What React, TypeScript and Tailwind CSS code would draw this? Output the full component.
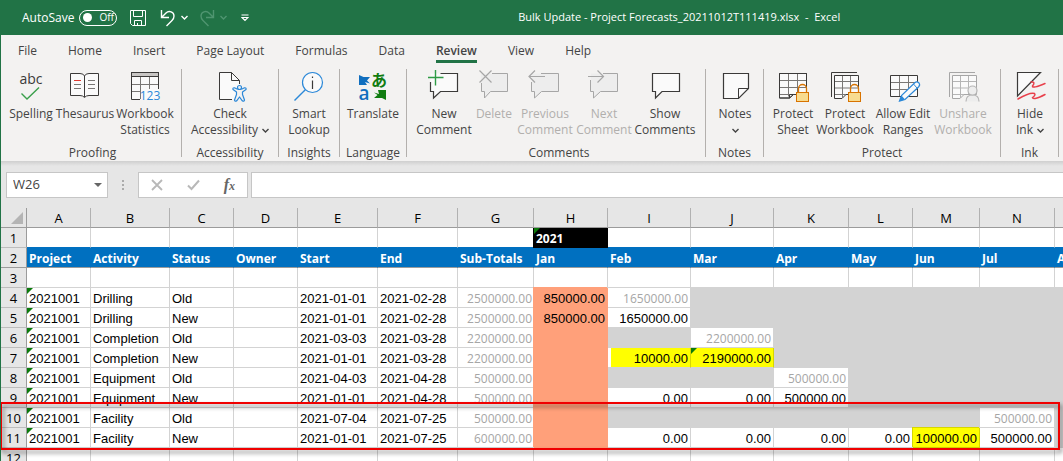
import type { ReactNode } from "react";
import clsx from "clsx";

/* ---------- icons ---------- */

const Svg = ({ children }: { children: ReactNode }) => (
  <svg
    viewBox="0 0 32 32"
    className="h-8 w-8 overflow-visible"
    fill="none"
    stroke="#3b3a39"
    aria-hidden="true"
  >
    {children}
  </svg>
);

const BUBBLE = "M12.5 4.5H29.5V22.5H12.5L5.5 29V22.5H2.5V13";

const Grid = ({ x, y, color }: { x: number; y: number; color: string }) => (
  <g transform={`translate(${x} ${y})`} stroke={color}>
    <path fill="#fafafa" d="M0 0H27V21H14L10 24.5H0Z" />
    <path stroke="#797775" d="M9 .5V23M18 .5V20.5M.5 7H26.5M.5 14H26.5M.5 21H10" />
    <path d="M10 24.5V21H14M0 0H27V21H14L10 24.5H0Z" />
  </g>
);

const SmallGrid = ({ color, inner }: { color: string; inner: string }) => (
  <g stroke={color}>
    <path d="M2.5 28V3.5H28" />
    <path fill="#fafafa" d="M5.5 6.5H29.5V25.5H17L13 29.5H5.5Z" />
    <path stroke={inner} d="M13.5 7V29M21.5 7V25M6 12.5H29M6 19H29M6 25.5H17" />
  </g>
);

const Lock = () => (
  <g stroke="#d87300">
    <path d="M21.5 23V19.5a4 4 0 0 1 8 0V23" strokeWidth="1.3" />
    <rect x="19.5" y="23.5" width="12" height="9" fill="#f8db8f" />
  </g>
);

const icons = {
  spelling: (
    <Svg>
      <text
        x="16"
        y="15"
        textAnchor="middle"
        stroke="none"
        fill="#3b3a39"
        fontSize="14"
        fontFamily="Open Sans, sans-serif"
      >
        abc
      </text>
      <path stroke="#3a9f4b" strokeWidth="1.4" d="M6.5 24.5L12 30L24 18.5" />
    </Svg>
  ),
  thesaurus: (
    <Svg>
      <path
        fill="#fafafa"
        d="M1.5 4.5H11Q14.5 4.5 15.5 7Q16.5 4.5 20 4.5H29.5V26.5H20Q17 26.5 15.5 28.5Q14 26.5 11 26.5H1.5Z"
      />
      <path d="M15.5 7V28" />
      <path stroke="#797775" d="M5 15.5H12M5 19.5H12M19 11.5H26M19 15.5H26M19 19.5H26" />
      <path stroke="#e03c32" d="M5 11.5H12" />
    </Svg>
  ),
  statistics: (
    <Svg>
      <rect x="2.5" y="3.5" width="27" height="27" fill="#fafafa" stroke="none" />
      <rect x="2.5" y="3.5" width="27" height="4" fill="#c8c6c4" />
      <path stroke="#797775" d="M11.5 8V30M20.5 8V20M3 15.5H29M3 22.5H12" />
      <path d="M11 30.5H2.5V3.5H29.5V20" />
      <text
        x="21"
        y="31"
        textAnchor="middle"
        fontSize="12"
        fill="#2b88d8"
        stroke="none"
        fontFamily="Open Sans, sans-serif"
      >
        123
      </text>
    </Svg>
  ),
  accessibility: (
    <Svg>
      <path fill="#fafafa" stroke="none" d="M5.5 3.5H17.5L25.5 11.5V30.5H5.5Z" />
      <path d="M18 30.5H5.5V3.5H17.5L25.5 11.5V15M17.5 3.5V11.5H25.5" />
      <g stroke="#2b88d8" fill="#f3f2f1" strokeWidth="1.2" strokeLinejoin="round">
        <path d="M19 20.5Q18.5 18.5 20.5 18.8L23 20H28L30.5 18.8Q32.5 18.5 32 20.5L28.5 23V25.5L30.5 31Q30 33 28.3 31.8L25.5 28L22.7 31.8Q21 33 20.5 31L22.5 25.5V23Z" />
        <circle cx="25.5" cy="18.5" r="2" />
      </g>
    </Svg>
  ),
  lookup: (
    <Svg>
      <circle cx="19.5" cy="13.5" r="10" fill="#fafafa" stroke="#2b88d8" strokeWidth="1.2" />
      <path stroke="#2b88d8" strokeWidth="1.4" d="M12.3 20.8L1.5 31.5" />
      <path d="M19.5 11.5V20M19.5 7.5V9" strokeWidth="1.2" />
    </Svg>
  ),
  translate: (
    <Svg>
      <path fill="#106ebe" stroke="none" d="M2 6L6.5 8H13L10 11.5L13 14.5L8 13L10 16H2Z" />
      <path fill="#107c10" stroke="none" d="M29 31L25 29H17L20.5 26L17 23.5L22 25L21 21H29Z" />
      <text
        x="22"
        y="17"
        textAnchor="middle"
        fontSize="16"
        fontWeight="700"
        fill="#107c10"
        stroke="none"
        fontFamily="Noto Sans CJK JP, sans-serif"
      >
        あ
      </text>
      <text
        x="7"
        y="31"
        textAnchor="middle"
        fontSize="19"
        fontWeight="600"
        fill="#106ebe"
        stroke="none"
        fontFamily="Open Sans, sans-serif"
      >
        a
      </text>
    </Svg>
  ),
  newComment: (
    <Svg>
      <path fill="#fafafa" stroke="none" d="M2.5 4.5H29.5V22.5H12.5L5.5 29V22.5H2.5Z" />
      <path d={BUBBLE} strokeWidth="1.2" />
      <path stroke="#2f9b45" strokeWidth="1.4" d="M0 8.5H15.5M7.5 1V16.5" />
    </Svg>
  ),
  deleteComment: (
    <Svg>
      <g stroke="#a6a6a6">
        <path fill="#ededed" stroke="none" d="M3 4.5H30V22.5H12L6 29V22.5H3Z" />
        <path d="M14 4.5H29.5V22.5H12.5L6.5 29V22.5H3.5V14" />
        <path strokeWidth="1.2" d="M1.5 1.5L13.5 13.5M13.5 1.5L1.5 13.5" />
      </g>
    </Svg>
  ),
  previousComment: (
    <Svg>
      <g stroke="#a6a6a6">
        <path fill="#ededed" stroke="none" d="M3 4.5H30V22.5H12L6 29V22.5H3Z" />
        <path d="M12 4.5H29.5V22.5H12.5L5.5 29V22.5H2.5V13" />
        <path strokeWidth="1.2" d="M16 7.5H0M6 1.5L0 7.5L6 13.5" />
      </g>
    </Svg>
  ),
  nextComment: (
    <Svg>
      <g stroke="#a6a6a6">
        <path fill="#ededed" stroke="none" d="M3 4.5H30V22.5H12L6 29V22.5H3Z" />
        <path d="M15 4.5H29.5V22.5H12.5L5.5 29V22.5H2.5V11" />
        <path strokeWidth="1.2" d="M0 7.5H15.5M9.5 1.5L15.5 7.5L9.5 13.5" />
      </g>
    </Svg>
  ),
  showComments: (
    <Svg>
      <path fill="#fafafa" strokeWidth="1.2" d="M3.5 4.5H30.5V22.5H13L6.5 29V22.5H3.5Z" />
    </Svg>
  ),
  notes: (
    <Svg>
      <path fill="#fafafa" strokeWidth="1.2" d="M4.5 4.5H29.5V19.5L19.5 29.5H4.5Z" />
      <path d="M19.5 29.5V19.5H29.5" />
    </Svg>
  ),
  protectSheet: (
    <Svg>
      <Grid x={2.5} y={4.5} color="#3b3a39" />
      <Lock />
    </Svg>
  ),
  protectWorkbook: (
    <Svg>
      <SmallGrid color="#3b3a39" inner="#797775" />
      <Lock />
    </Svg>
  ),
  allowEdit: (
    <Svg>
      <path fill="#fafafa" d="M3.5 6.5H30.5V27.5H3.5Z" />
      <path stroke="#797775" d="M12.5 7V27M21.5 7V27M4 13.5H30M4 20.5H30" />
      <path
        fill="#fafafa"
        stroke="#2b88d8"
        strokeWidth="1.2"
        d="M12.5 32L14.5 26.5L28 13.5Q30 12 32 14Q33.5 16 31.5 18L18 30.5Z"
      />
      <path fill="#2b88d8" stroke="none" d="M12.5 32L14.5 26.5L18 30.5Z" />
      <path stroke="#2b88d8" d="M26.5 15L30 19" />
    </Svg>
  ),
  unshare: (
    <Svg>
      <SmallGrid color="#a6a6a6" inner="#b5b5b5" />
      <g fill="#ededed" stroke="#b5b5b5" strokeWidth="1.2">
        <path d="M19 32.5Q19 26 25.5 26Q32 26 32 32.5" />
        <circle cx="25.5" cy="21.5" r="4.5" />
      </g>
    </Svg>
  ),
  hideInk: (
    <Svg>
      <path fill="#fafafa" strokeWidth="1.2" d="M3.5 3.5H26.5L3.5 27Z" />
      <g stroke="#e8404b" strokeWidth="1.5" strokeLinecap="round">
        <path d="M17 13Q22 12.5 18.5 17Q18 20 31 14.5" />
        <path d="M4 30Q16 23 20.5 24.5Q22 26 18.5 28.5Q19.5 31.5 31 25.5" />
      </g>
    </Svg>
  ),
};

const Chevron = () => (
  <svg
    viewBox="0 0 7 5"
    className="h-[5px] w-[7px]"
    fill="none"
    stroke="currentColor"
    strokeWidth="1.4"
    aria-hidden="true"
  >
    <path d="M.5 1L3.5 4L6.5 1" />
  </svg>
);

/* ---------- ribbon ---------- */

type Tool = {
  lines: string[];
  icon: ReactNode;
  width: string;
  disabled?: boolean;
  menu?: boolean;
};

type Group = { label: string; className: string; tools: Tool[] };

const groups: Group[] = [
  {
    label: "Proofing",
    className: "w-[181px] pl-[3px]",
    tools: [
      { lines: ["Spelling"], icon: icons.spelling, width: "w-[54px]" },
      { lines: ["Thesaurus"], icon: icons.thesaurus, width: "w-[54px]" },
      { lines: ["Workbook", "Statistics"], icon: icons.statistics, width: "w-[66px]" },
    ],
  },
  {
    label: "Accessibility",
    className: "w-[97px] px-1",
    tools: [
      { lines: ["Check", "Accessibility"], icon: icons.accessibility, width: "w-[88px]", menu: true },
    ],
  },
  {
    label: "Insights",
    className: "w-[61px] px-1",
    tools: [{ lines: ["Smart", "Lookup"], icon: icons.lookup, width: "w-[52px]" }],
  },
  {
    label: "Language",
    className: "w-[67px] px-1",
    tools: [{ lines: ["Translate"], icon: icons.translate, width: "w-[58px]" }],
  },
  {
    label: "Comments",
    className: "w-[299px] pr-1 pl-[10px]",
    tools: [
      { lines: ["New", "Comment"], icon: icons.newComment, width: "w-[54px]" },
      { lines: ["Delete"], icon: icons.deleteComment, width: "w-[46px]", disabled: true },
      { lines: ["Previous", "Comment"], icon: icons.previousComment, width: "w-[56px]", disabled: true },
      { lines: ["Next", "Comment"], icon: icons.nextComment, width: "w-[62px]", disabled: true },
      { lines: ["Show", "Comments"], icon: icons.showComments, width: "w-[60px]" },
    ],
  },
  {
    label: "Notes",
    className: "w-[58px] px-1",
    tools: [{ lines: ["Notes", ""], icon: icons.notes, width: "w-[50px]", menu: true }],
  },
  {
    label: "Protect",
    className: "w-[237px] px-[5px]",
    tools: [
      { lines: ["Protect", "Sheet"], icon: icons.protectSheet, width: "w-[48px]" },
      { lines: ["Protect", "Workbook"], icon: icons.protectWorkbook, width: "w-[56px]" },
      { lines: ["Allow Edit", "Ranges"], icon: icons.allowEdit, width: "w-[60px]" },
      { lines: ["Unshare", "Workbook"], icon: icons.unshare, width: "w-[60px]", disabled: true },
    ],
  },
  {
    label: "Ink",
    className: "w-[58px] px-1",
    tools: [{ lines: ["Hide", "Ink"], icon: icons.hideInk, width: "w-[50px]", menu: true }],
  },
];

const ToolButton = ({ lines, icon, width, disabled, menu }: Tool) => (
  <button
    type="button"
    disabled={disabled}
    className={clsx(
      "flex shrink-0 flex-col items-center text-xs leading-4 text-[#444444] disabled:text-[#b1afad]",
      width,
    )}
  >
    {icon}
    <span className="flex flex-col items-center pt-[5px]">
      {lines.map((line, i) => (
        <span key={i} className="flex h-4 items-center gap-1 whitespace-nowrap">
          {line}
          {menu && i === lines.length - 1 && <Chevron />}
        </span>
      ))}
    </span>
  </button>
);

const RibbonGroup = ({ label, className, tools }: Group) => (
  <section
    aria-label={label}
    className={clsx("flex h-[88px] shrink-0 flex-col border-r border-[#b3b0ad]", className)}
  >
    <div className="flex h-[76px] shrink-0 items-start">
      {tools.map((tool, i) => (
        <ToolButton key={i} {...tool} />
      ))}
    </div>
    <div className="text-center text-xs leading-4 text-[#444444]">{label}</div>
  </section>
);

const tabs = ["File", "Home", "Insert", "Page Layout", "Formulas", "Data", "Review", "View", "Help"];

/* ---------- title bar ---------- */

const TitleBar = () => (
  <header className="flex h-[35px] items-center bg-[#217346] pl-[21px] text-xs text-white">
    <label htmlFor="autosave">AutoSave</label>
    <button
      id="autosave"
      type="button"
      role="switch"
      aria-checked="false"
      className="ml-[5px] flex h-4 w-[38px] items-center gap-[7px] rounded-full border border-white pl-[3px] text-[10px]"
    >
      <span className="size-[9px] rounded-full bg-white" />
      Off
    </button>
    <button type="button" aria-label="Save" className="ml-3">
      <svg viewBox="0 0 18 18" className="size-[18px]" fill="none" stroke="#fff">
        <path d="M1.5 1.5H16.5V16.5H3.5L1.5 14.5ZM4.5 1.5V7.5H13.5V1.5M5.5 16.5V11.5H12.5V16.5M8.5 14V16.5" />
      </svg>
    </button>
    <button type="button" aria-label="Undo" className="ml-3 flex items-center gap-1">
      <svg viewBox="0 0 18 18" className="size-[18px]" fill="none" stroke="#fff" strokeWidth="1.4">
        <path d="M2.5 1V8.500H10M2.500 8.500L7 4C10 1 15 3 15 7C15 9 14 10.500 13 11.500L7.500 17" />
      </svg>
      <Chevron />
    </button>
    <button
      type="button"
      aria-label="Redo"
      disabled
      className="ml-[10px] flex items-center gap-1 text-[#4f9570]"
    >
      <svg viewBox="0 0 18 18" className="size-[18px]" fill="none" stroke="currentColor" strokeWidth="1.4">
        <path d="M15.5 1V8.5H8M15.5 8.5L11 4C8 1 3 3 3 7C3 9 4 10.5 5 11.5L10.5 17" />
      </svg>
      <Chevron />
    </button>
    <button type="button" aria-label="Customize Quick Access Toolbar" className="ml-[14px]">
      <svg viewBox="0 0 8 8" className="size-2" fill="none" stroke="#fff" strokeWidth="1.2">
        <path d="M.5 1H7.5M1 3.5L4 6.5L7 3.5Z" />
      </svg>
    </button>
    <h1 className="flex-1 pl-[46px] text-center text-[11px] whitespace-pre">
      Bulk Update - Project Forecasts_20211012T111419.xlsx  -  Excel
    </h1>
  </header>
);

/* ---------- formula bar ---------- */

const FormulaBar = () => (
  <div className="bg-[#e6e6e6]">
    <div className="h-[5px] bg-linear-to-b from-[#cfcfcf] to-[#e6e6e6]" />
    <div className="flex h-[42px] items-start pt-[6px] pl-[5px]">
      <div className="flex h-[26px] w-[102px] items-center border border-[#c6c6c6] bg-white pr-[5px] pl-[6px]">
        <input
          aria-label="Name Box"
          defaultValue="W26"
          className="w-0 flex-1 bg-transparent text-[13px] text-[#444444] outline-none"
        />
        <button type="button" aria-label="Open Name Box">
          <svg viewBox="0 0 8 4" className="h-1 w-2" fill="#666">
            <path d="M0 0H8L4 4Z" />
          </svg>
        </button>
      </div>
      <div className="flex h-[26px] w-[30px] flex-col items-center justify-center gap-[2px]">
        <span className="size-[2px] bg-[#ababab]" />
        <span className="size-[2px] bg-[#ababab]" />
        <span className="size-[2px] bg-[#ababab]" />
      </div>
      <div className="flex h-[26px] w-[110px] items-center justify-between border border-[#c6c6c6] bg-white px-[12px]">
        <button type="button" aria-label="Cancel" disabled>
          <svg viewBox="0 0 12 12" className="size-3" stroke="#b8b8b8" strokeWidth="1.8">
            <path d="M1 1L11 11M11 1L1 11" />
          </svg>
        </button>
        <button type="button" aria-label="Enter" disabled>
          <svg viewBox="0 0 13 12" className="h-3 w-[13px]" fill="none" stroke="#b8b8b8" strokeWidth="2">
            <path d="M1 6.5L4.5 10L12 1.5" />
          </svg>
        </button>
        <button
          type="button"
          aria-label="Insert Function"
          className="font-['Liberation_Serif',serif] text-base leading-4 font-bold text-[#666666] italic"
        >
          f<span className="text-xs">x</span>
        </button>
      </div>
      <input
        aria-label="Formula Bar"
        className="ml-[3px] h-[26px] min-w-0 flex-1 border border-r-0 border-[#c6c6c6] bg-white outline-none"
      />
    </div>
  </div>
);

/* ---------- sheet ---------- */

const columns = [
  { name: "A", width: 64, title: "Project" },
  { name: "B", width: 79, title: "Activity" },
  { name: "C", width: 64, title: "Status" },
  { name: "D", width: 64, title: "Owner" },
  { name: "E", width: 80, title: "Start" },
  { name: "F", width: 80, title: "End" },
  { name: "G", width: 76, title: "Sub-Totals" },
  { name: "H", width: 74, title: "Jan" },
  { name: "I", width: 83, title: "Feb" },
  { name: "J", width: 83, title: "Mar" },
  { name: "K", width: 75, title: "Apr" },
  { name: "L", width: 64, title: "May" },
  { name: "M", width: 67, title: "Jun" },
  { name: "N", width: 75, title: "Jul" },
  { name: "", width: 64, title: "Aug" },
];

// One entry per month column, Jan to Aug. "#" is a blocked month.
const rows = [
  ["Drilling", "Old", "2021-01-01", "2021-02-28", "2500000.00", "850000.00", "1650000.00", "#", "#", "#", "#", "#", "#"],
  ["Drilling", "New", "2021-01-01", "2021-02-28", "2500000.00", "850000.00", "1650000.00", "#", "#", "#", "#", "#", "#"],
  ["Completion", "Old", "2021-03-03", "2021-03-28", "2200000.00", "", "#", "2200000.00", "#", "#", "#", "#", "#"],
  ["Completion", "New", "2021-01-01", "2021-03-28", "2200000.00", "", "10000.00", "2190000.00", "#", "#", "#", "#", "#"],
  ["Equipment", "Old", "2021-04-03", "2021-04-28", "500000.00", "", "#", "#", "500000.00", "#", "#", "#", "#"],
  ["Equipment", "New", "2021-01-01", "2021-04-28", "500000.00", "", "0.00", "0.00", "500000.00", "#", "#", "#", "#"],
  ["Facility", "Old", "2021-07-04", "2021-07-25", "500000.00", "", "#", "#", "#", "#", "#", "500000.00", "#"],
  ["Facility", "New", "2021-01-01", "2021-07-25", "600000.00", "", "0.00", "0.00", "0.00", "0.00", "100000.00", "500000.00", "#"],
];

const Flag = () => (
  <span className="absolute top-0 left-0 size-[6px] bg-[#0b7a0b] [clip-path:polygon(0_0,100%_0,0_100%)]" />
);

const cellBase = "relative h-5 border-r border-b p-0 pt-[2px] whitespace-nowrap leading-[17px]";

const RowHeader = ({ n, strong }: { n: number; strong?: boolean }) => (
  <th
    scope="row"
    className={clsx(
      cellBase,
      "border-r-[#9b9b9b] bg-[#e6e6e6] text-center text-[13px] font-normal",
      strong ? "border-b-[#9b9b9b]" : "border-b-[#bdbdbd]",
    )}
  >
    {n}
  </th>
);

const EmptyRow = ({ n }: { n: number }) => (
  <tr>
    <RowHeader n={n} />
    {columns.map((c, i) => (
      <td key={i} className={clsx(cellBase, "border-[#d3d3d3]")} />
    ))}
  </tr>
);

const MonthCell = ({ value, row, month }: { value: string; row: number; month: number }) => {
  const blocked = value === "#";
  const faded = row % 2 === 0 && month > 0;
  const changed = row === 3 && (month === 1 || month === 2);
  const selected = row === 7 && month === 5;

  return (
    <td
      className={clsx(
        cellBase,
        "pr-[2px] text-right",
        month === 0 && "border-[#ffa07a] bg-[#ffa07a] shadow-[-1px_-1px_0_#ffa07a]",
        blocked && "border-[#d3d3d3] bg-[#d3d3d3]",
        changed && "border-[#d3d3d3] border-r-[#d6d600] bg-[#ffff00]",
        changed && month === 1 && "shadow-[inset_3px_0_0_#ffffff]",
        selected && "border-[#d6d600] bg-[#ffff00] shadow-[-1px_-1px_0_#d6d600]",
        month > 0 && !blocked && !changed && !selected && "border-[#d3d3d3]",
        faded ? "font-['Open_Sans',sans-serif] text-xs leading-[17px] text-[#a6a6a6]" : "text-[13px]",
      )}
    >
      {row === 3 && month === 2 && <Flag />}
      {!blocked && value}
    </td>
  );
};

const Sheet = () => (
  <main className="relative overflow-hidden">
    <table className="w-full min-w-[1118px] table-fixed border-separate border-spacing-0 bg-white text-black">
      <colgroup>
        <col style={{ width: 26 }} />
        {columns.map((c, i) => (
          <col key={i} style={i < columns.length - 1 ? { width: c.width } : undefined} />
        ))}
      </colgroup>
      <thead>
        <tr className="bg-[#e6e6e6] text-[13px]">
          <th aria-label="Select all" className={clsx(cellBase, "border-[#9b9b9b]")}>
            <span className="absolute right-[3px] bottom-[3px] size-3 bg-[#b4b4b4] [clip-path:polygon(100%_0,100%_100%,0_100%)]" />
          </th>
          {columns.map((c, i) => (
            <th
              key={i}
              scope="col"
              className={clsx(cellBase, "border-r-[#b1b1b1] border-b-[#9b9b9b] text-center font-normal")}
            >
              {c.name}
            </th>
          ))}
        </tr>
      </thead>
      <tbody className="font-['Liberation_Sans',Arial,sans-serif] text-[13px] [&_th]:font-['Open_Sans',sans-serif]">
        <tr>
          <RowHeader n={1} />
          {columns.map((c, i) => (
            <td
              key={i}
              className={clsx(
                cellBase,
                c.name === "H"
                  ? "border-black bg-black pl-[2px] font-['Open_Sans',sans-serif] text-xs leading-[17px] font-bold text-white shadow-[-1px_0_0_#000000]"
                  : "border-r-[#d3d3d3] border-b-[#0070c0]",
              )}
            >
              {c.name === "H" && (
                <>
                  <Flag />
                  2021
                </>
              )}
            </td>
          ))}
        </tr>
        <tr>
          <RowHeader n={2} strong />
          {columns.map((c) => (
            <td
              key={c.title}
              className={clsx(
                cellBase,
                "border-r-[#0070c0] border-b-[#9b9b9b] bg-[#0070c0] pl-[2px] font-['Open_Sans',sans-serif] text-xs leading-[17px] font-bold text-white",
              )}
            >
              {c.title}
            </td>
          ))}
        </tr>
        <EmptyRow n={3} />
        {rows.map(([activity, status, start, end, total, ...months], r) => (
          <tr key={r}>
            <RowHeader n={r + 4} />
            {["2021001", activity, status, "", start, end].map((value, i) => (
              <td key={i} className={clsx(cellBase, "border-[#d3d3d3] pl-[2px]")}>
                {i === 0 && <Flag />}
                {value}
              </td>
            ))}
            <td
              className={clsx(
                cellBase,
                "border-[#d3d3d3] pr-px text-right font-['Open_Sans',sans-serif] text-xs leading-[17px] text-[#a6a6a6]",
              )}
            >
              {total}
            </td>
            {months.map((value, m) => (
              <MonthCell key={m} value={value} row={r} month={m} />
            ))}
          </tr>
        ))}
        <EmptyRow n={12} />
      </tbody>
    </table>

    {/* Highlight around rows 10 and 11 */}
    <div className="pointer-events-none absolute top-[194px] right-[3px] left-[-1px] h-12 border-2 border-[#f00000] drop-shadow-[2px_3px_2px_rgba(0,0,0,0.5)]" />
  </main>
);

export default function App() {
  return (
    <div className="h-screen overflow-hidden border-l border-[#217346] bg-white font-['Open_Sans','Noto_Sans',sans-serif]">
      <TitleBar />
      <div className="overflow-hidden bg-[#f3f2f1]">
        <nav aria-label="Ribbon tabs" className="flex h-[34px] items-start gap-[31px] pl-[17px] text-xs">
          {tabs.map((tab) => (
            <button
              key={tab}
              type="button"
              className={clsx(
                "h-7 border-b-3 pt-[6px] whitespace-nowrap text-[#444444]",
                tab === "Review" ? "border-[#217346] font-semibold" : "border-transparent",
              )}
            >
              {tab}
            </button>
          ))}
        </nav>
        <div className="flex h-[92px]">
          {groups.map((group) => (
            <RibbonGroup key={group.label} {...group} />
          ))}
        </div>
      </div>
      <FormulaBar />
      <Sheet />
    </div>
  );
}
